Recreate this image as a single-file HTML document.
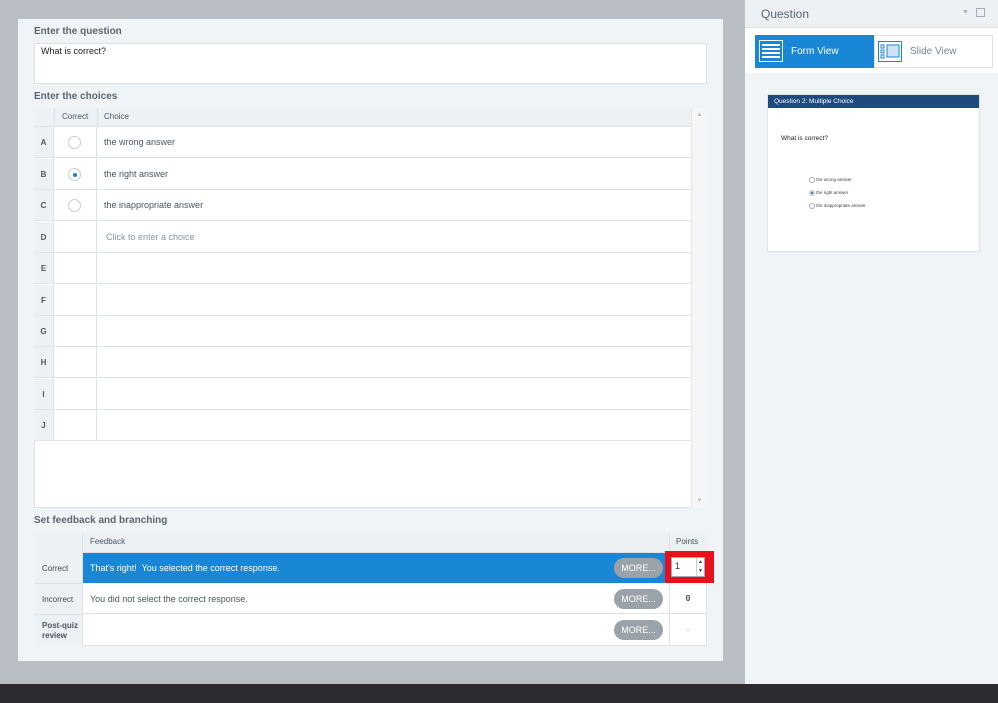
<!DOCTYPE html>
<html><head><style>
*{margin:0;padding:0;box-sizing:border-box}
body{width:998px;height:703px;position:relative;overflow:hidden;background:#b9bfc5;font-family:"Liberation Sans",sans-serif;font-size:9px;color:#4a5560}
.a{position:absolute}
.lbl{font-size:10px;font-weight:bold;color:#5a6570}
.row{position:absolute;left:34px;width:657px;height:31px;background:#fff;border-bottom:1px solid #e0e4e8}
.row .l{position:absolute;left:0;top:0;width:20px;height:100%;background:#eef1f4;border-right:1px solid #dde2e6;text-align:center;line-height:31px;font-weight:bold;font-size:8px;color:#555}
.row .c{position:absolute;left:20px;top:0;width:43px;height:100%;border-right:1px solid #dde2e6}
.row .t{position:absolute;left:70px;top:0;line-height:31px;color:#4a5560}
.rad{position:absolute;left:14px;top:9px;width:13px;height:13px;border:1px solid #c8cdd2;border-radius:50%;background:#fff}
.more{position:absolute;right:6px;top:5px;width:49px;height:20px;border-radius:10px;background:#9aa2aa;color:#fff;font-size:9px;line-height:20px;text-align:center}
</style></head><body>
<div class="a" style="left:18px;top:19px;width:705px;height:642px;background:#f1f4f7"></div>
<div class="a lbl" style="left:34px;top:26px">Enter the question</div>
<div class="a" style="left:34px;top:43px;width:673px;height:41px;background:#fff;border:1px solid #dde2e6;padding:2px 6px;color:#222;font-size:9px">What is correct?</div>
<div class="a lbl" style="left:34px;top:91px">Enter the choices</div>
<div class="a" style="left:34px;top:108px;width:673px;height:400px;background:#fff;border:1px solid #dde2e6"></div>
<div class="a" style="left:34px;top:108px;width:657px;height:19px;background:#eef1f4;border-bottom:1px solid #dde2e6"></div>
<div class="a" style="left:54px;top:108px;width:1px;height:19px;background:#dde2e6"></div>
<div class="a" style="left:97px;top:108px;width:1px;height:19px;background:#dde2e6"></div>
<div class="a" style="left:62px;top:112px;font-size:8px">Correct</div>
<div class="a" style="left:104px;top:112px;font-size:8px">Choice</div>
<div class="a" style="left:691px;top:108px;width:16px;height:400px;background:#f4f6f8;border-left:1px solid #e4e7ea;color:#bbb;font-size:6px;text-align:center;padding-top:4px">▲<div style="position:absolute;bottom:4px;width:100%">▼</div></div>
<div class="row" style="top:127px"><div class="l">A</div><div class="c"><div class="rad"></div></div><div class="t">the wrong answer</div></div>
<div class="row" style="top:159px"><div class="l">B</div><div class="c"><div class="rad"><div style="position:absolute;left:4px;top:4px;width:4px;height:4px;border-radius:50%;background:#1a7fd4"></div></div></div><div class="t">the right answer</div></div>
<div class="row" style="top:190px"><div class="l">C</div><div class="c"><div class="rad"></div></div><div class="t">the inappropriate answer</div></div>
<div class="row" style="top:222px"><div class="l">D</div><div class="c"></div><div class="t" style="left:72px;color:#8a949e">Click to enter a choice</div></div>
<div class="row" style="top:253px"><div class="l">E</div><div class="c"></div></div>
<div class="row" style="top:285px"><div class="l">F</div><div class="c"></div></div>
<div class="row" style="top:316px"><div class="l">G</div><div class="c"></div></div>
<div class="row" style="top:347px"><div class="l">H</div><div class="c"></div></div>
<div class="row" style="top:379px"><div class="l">I</div><div class="c"></div></div>
<div class="row" style="top:410px"><div class="l">J</div><div class="c"></div></div>

<div class="a lbl" style="left:34px;top:515px;font-weight:bold;color:#5a6570">Set feedback and branching</div>
<div class="a" style="left:34px;top:532px;width:673px;height:114px;background:#fff;border:1px solid #dde2e6"></div>
<div class="a" style="left:34px;top:532px;width:673px;height:21px;background:#eef1f4;border-bottom:1px solid #dde2e6"></div>
<div class="a" style="left:34px;top:532px;width:49px;height:114px;background:#eef1f4;border-right:1px solid #dde2e6"></div>
<div class="a" style="left:34px;top:583px;width:49px;height:1px;background:#dde2e6"></div>
<div class="a" style="left:34px;top:614px;width:49px;height:1px;background:#dde2e6"></div>
<div class="a" style="left:669px;top:532px;width:1px;height:114px;background:#dde2e6"></div>
<div class="a" style="left:90px;top:537px;font-size:8px">Feedback</div>
<div class="a" style="left:676px;top:537px;font-size:8px">Points</div>
<div class="a" style="left:42px;top:564px;font-size:8px;color:#444">Correct</div>
<div class="a" style="left:42px;top:595px;font-size:8px;color:#444">Incorrect</div>
<div class="a" style="left:42px;top:621px;font-size:8px;font-weight:bold;line-height:10px">Post-quiz<br>review</div>
<div class="a" style="left:83px;top:553px;width:586px;height:30px;background:#1a86d6;color:#fff;line-height:30px;padding-left:7px">That's right!&nbsp; You selected the correct response.<div class="more">MORE...</div></div>
<div class="a" style="left:83px;top:584px;width:586px;height:30px;border-bottom:1px solid #e0e4e8;line-height:30px;padding-left:7px">You did not select the correct response.<div class="more">MORE...</div></div>
<div class="a" style="left:83px;top:615px;width:586px;height:30px"><div class="more">MORE...</div></div>
<div class="a" style="left:669px;top:584px;width:38px;height:30px;border-bottom:1px solid #e0e4e8;text-align:center;line-height:30px;font-weight:bold;font-size:8px;color:#335">0</div>
<div class="a" style="left:669px;top:615px;width:38px;height:30px;text-align:center;line-height:30px;color:#aaa">-</div>
<div class="a" style="left:665px;top:551px;width:49px;height:32px;background:#e8101a"></div>
<div class="a" style="left:671px;top:557px;width:34px;height:20px;background:#fff;border:1px solid #aab;color:#333;padding:3px 3px;font-size:9px">1<div style="position:absolute;right:0;top:0;width:8px;height:18px;border-left:1px solid #ccc;font-size:5px;text-align:center;line-height:9px">▲<br>▼</div></div>

<div class="a" style="left:0;top:684px;width:998px;height:19px;background:#2d2b2f"></div>

<div class="a" style="left:745px;top:0;width:253px;height:684px;background:#f1f4f7"></div>
<div class="a" style="left:745px;top:0;width:253px;height:28px;background:#eef1f4;border-bottom:1px solid #dde2e6"></div>
<div class="a" style="left:761px;top:7px;font-size:12px;color:#5a6570">Question</div>
<div class="a" style="left:962px;top:9px;font-size:7px;color:#aab">▼</div>
<div class="a" style="left:976px;top:8px;width:9px;height:9px;border:1px solid #aab"></div>
<div class="a" style="left:745px;top:28px;width:253px;height:45px;background:#fff"></div>
<div class="a" style="left:755px;top:35px;width:119px;height:33px;background:#1a86d6"></div>
<div class="a" style="left:874px;top:35px;width:119px;height:33px;background:#fff;border:1px solid #dde2e6"></div>
<svg class="a" style="left:759px;top:40px" width="24" height="22"><rect x="0.5" y="0.5" width="23" height="21" fill="none" stroke="#fff"/><g stroke="#fff" stroke-width="2"><line x1="3" y1="5" x2="21" y2="5"/><line x1="3" y1="9" x2="21" y2="9"/><line x1="3" y1="13" x2="21" y2="13"/><line x1="3" y1="17" x2="21" y2="17"/></g></svg>
<div class="a" style="left:791px;top:46px;color:#fff;font-size:10px">Form View</div>
<svg class="a" style="left:878px;top:41px" width="24" height="21"><rect x="0.5" y="0.5" width="23" height="20" fill="none" stroke="#1a86d6"/><rect x="3" y="4" width="3" height="3" fill="none" stroke="#1a86d6"/><rect x="3" y="9" width="3" height="3" fill="none" stroke="#1a86d6"/><rect x="3" y="14" width="3" height="3" fill="none" stroke="#1a86d6"/><rect x="9" y="4" width="12" height="12" fill="#cfe3f5" stroke="#1a86d6"/></svg>
<div class="a" style="left:910px;top:46px;color:#7a848e;font-size:10px">Slide View</div>
<div class="a" style="left:767px;top:94px;width:213px;height:158px;background:#fff;border:1px solid #dde2e6"></div>
<div class="a" style="left:768px;top:95px;width:211px;height:13px;background:#1e4a7e;color:#fff;font-size:6.5px;line-height:13px;padding-left:6px">Question 2: Multiple Choice</div>
<div class="a" style="left:781px;top:135px;font-size:6.5px;color:#222">What is correct?</div>
<div class="a" style="left:809px;top:173px;font-size:4.5px;color:#444;line-height:13px">
<div><span style="display:inline-block;width:6px;height:6px;border:1px solid #aaa;border-radius:50%;vertical-align:middle"></span> the wrong answer</div>
<div><span style="display:inline-block;width:6px;height:6px;border:2px solid #ccc;background:#3a6ea8;border-radius:50%;vertical-align:middle"></span> the right answer</div>
<div><span style="display:inline-block;width:6px;height:6px;border:1px solid #aaa;border-radius:50%;vertical-align:middle"></span> the inappropriate answer</div>
</div>
</body></html>
